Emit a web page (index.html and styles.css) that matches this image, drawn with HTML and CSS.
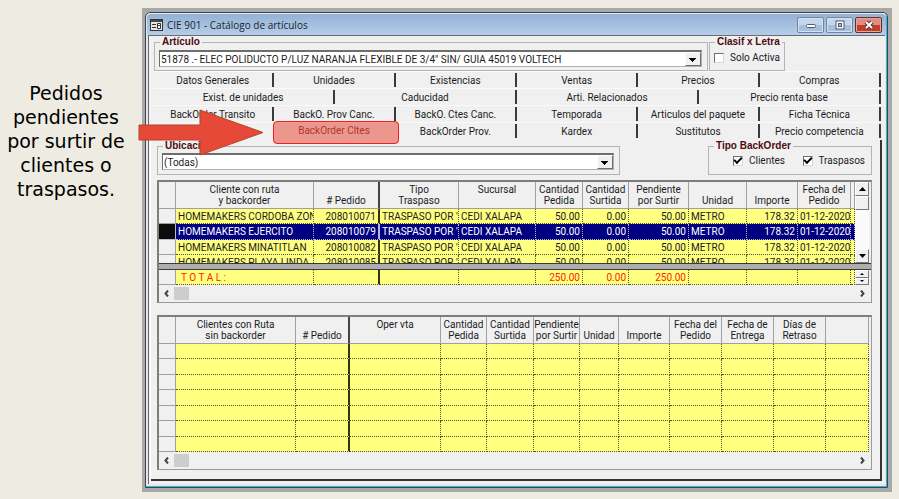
FILE: index.html
```html
<!DOCTYPE html>
<html lang="es">
<head>
<meta charset="utf-8">
<title>CIE 901 - Catálogo de artículos</title>
<link rel="stylesheet" href="styles.css">
</head>
<body>
<aside class="note">Pedidos pendientes por surtir de clientes o traspasos.</aside>
<main class="window">
  <div class="frame">
    <header class="titlebar">
      <svg class="app-icon" viewBox="0 0 13 12" width="13" height="12" aria-hidden="true">
        <rect x="0.5" y="0.5" width="12" height="11" fill="#e4e4e4" stroke="#333"/>
        <path d="M1 2h11" stroke="#444" stroke-width="2"/>
        <path d="M2 5.500h4M2 8.500h4" stroke="#333"/>
        <path d="M7.500 4.500h3v2h-3zM7.500 6.500h3v3h-3z" fill="#fff" stroke="#333"/>
      </svg>
      <h1 class="title">CIE 901 - Catálogo de artículos</h1>
      <div class="caption-buttons">
        <button type="button" class="caption" aria-label="Minimizar"><svg viewBox="0 0 12 10" width="12" height="10"><rect x="1.500" y="4.500" width="9" height="3" rx="1" fill="#fff" stroke="#4c5a6c"/></svg></button>
        <button type="button" class="caption" aria-label="Maximizar"><svg viewBox="0 0 12 10" width="12" height="10"><rect x="2" y="1" width="8" height="8" fill="#fff" stroke="#4c5a6c"/><rect x="4.500" y="3.500" width="3" height="3" fill="#a9bfd9" stroke="#4c5a6c"/></svg></button>
        <button type="button" class="caption close" aria-label="Cerrar"><svg viewBox="0 0 12 10" width="12" height="10"><path d="M3 2l6 6M9 2l-6 6" stroke="#5b2f35" stroke-width="4"/><path d="M3 2l6 6M9 2l-6 6" stroke="#fff" stroke-width="2"/></svg></button>
      </div>
    </header>
    <div class="client">
      <div class="top-row">
        <fieldset class="group grow">
          <legend>Artículo</legend>
          <div class="combo">
            <select aria-label="Artículo"><option>51878 .- ELEC POLIDUCTO P/LUZ NARANJA FLEXIBLE DE 3/4" SIN/ GUIA 45019 VOLTECH</option></select>
          </div>
        </fieldset>
        <fieldset class="group clasif">
          <legend>Clasif x Letra</legend>
          <label class="check"><input type="checkbox">Solo Activa</label>
        </fieldset>
      </div>
      <nav class="tabs">
        <div class="tab-row">
          <button type="button">Datos Generales</button><button type="button">Unidades</button><button type="button">Existencias</button><button type="button">Ventas</button><button type="button">Precios</button><button type="button">Compras</button>
        </div>
        <div class="tab-row">
          <button type="button">Exist. de unidades</button><button type="button">Caducidad</button><button type="button">Arti. Relacionados</button><button type="button">Precio renta base</button>
        </div>
        <div class="tab-row">
          <button type="button">BackOrder Transito</button><button type="button">BackO. Prov Canc.</button><button type="button">BackO. Ctes Canc.</button><button type="button">Temporada</button><button type="button">Articulos del paquete</button><button type="button">Ficha Técnica</button>
        </div>
        <div class="tab-row">
          <span class="blank"></span><button type="button" class="active">BackOrder Cltes</button><button type="button">BackOrder Prov.</button><button type="button">Kardex</button><button type="button">Sustitutos</button><button type="button">Precio competencia</button>
        </div>
      </nav>
      <section class="page">
        <div class="filters">
          <fieldset class="group grow">
            <legend>Ubicación</legend>
            <div class="combo"><select aria-label="Ubicación"><option>(Todas)</option></select></div>
          </fieldset>
          <fieldset class="group tipo">
            <legend>Tipo BackOrder</legend>
            <div class="checks">
              <label class="check"><input type="checkbox" checked>Clientes</label>
              <label class="check"><input type="checkbox" checked>Traspasos</label>
            </div>
          </fieldset>
        </div>

        <div class="grid">
          <div class="pane">
            <div class="viewport">
              <table class="orders">
                <colgroup><col class="w17"><col class="w138"><col class="w66"><col class="w79"><col class="w77"><col class="w47"><col class="w46"><col class="w60"><col class="w58"><col class="w51"><col class="w53"><col class="w4"></colgroup>
                <thead><tr><th></th><th>Cliente con ruta<br>y backorder</th><th class="thick"># Pedido</th><th>Tipo<br>Traspaso</th><th class="up">Sucursal</th><th>Cantidad<br>Pedida</th><th>Cantidad<br>Surtida</th><th>Pendiente<br>por Surtir</th><th>Unidad</th><th>Importe</th><th>Fecha del<br>Pedido</th><th></th></tr></thead>
                <tbody>
                  <tr><td></td><td>HOMEMAKERS CORDOBA ZON</td><td class="num thick">208010071</td><td>TRASPASO POR '</td><td>CEDI XALAPA</td><td class="num">50.00</td><td class="num">0.00</td><td class="num">50.00</td><td>METRO</td><td class="num">178.32</td><td>01-12-2020</td><td></td></tr>
                  <tr class="selected"><td></td><td>HOMEMAKERS EJERCITO</td><td class="num thick">208010079</td><td>TRASPASO POR '</td><td>CEDI XALAPA</td><td class="num">50.00</td><td class="num">0.00</td><td class="num">50.00</td><td>METRO</td><td class="num">178.32</td><td>01-12-2020</td><td></td></tr>
                  <tr><td></td><td>HOMEMAKERS MINATITLAN</td><td class="num thick">208010082</td><td>TRASPASO POR '</td><td>CEDI XALAPA</td><td class="num">50.00</td><td class="num">0.00</td><td class="num">50.00</td><td>METRO</td><td class="num">178.32</td><td>01-12-2020</td><td></td></tr>
                  <tr><td></td><td>HOMEMAKERS PLAYA LINDA</td><td class="num thick">208010085</td><td>TRASPASO POR '</td><td>CEDI XALAPA</td><td class="num">50.00</td><td class="num">0.00</td><td class="num">50.00</td><td>METRO</td><td class="num">178.32</td><td>01-12-2020</td><td></td></tr>
                </tbody>
              </table>
            </div>
            <div class="vscroll">
              <button type="button" aria-label="Subir"><svg viewBox="0 0 7 4" width="7" height="4"><path d="M0 4L3.500 0L7 4z"/></svg></button>
              <span class="thumb"></span>
              <span class="track"></span>
              <button type="button" aria-label="Bajar"><svg viewBox="0 0 7 4" width="7" height="4"><path d="M0 0L3.500 4L7 0z"/></svg></button>
            </div>
          </div>
          <div class="splitter"></div>
          <div class="pane">
            <div class="viewport total">
              <table class="orders">
                <colgroup><col class="w17"><col class="w138"><col class="w66"><col class="w79"><col class="w77"><col class="w47"><col class="w46"><col class="w60"><col class="w58"><col class="w51"><col class="w53"><col class="w4"></colgroup>
                <tbody><tr><td></td><td class="total-label">T O T A L :</td><td class="thick"></td><td></td><td></td><td class="num">250.00</td><td class="num">0.00</td><td class="num">250.00</td><td></td><td></td><td></td><td></td></tr></tbody>
              </table>
            </div>
            <div class="vscroll spin">
              <button type="button" aria-label="Anterior"><svg viewBox="0 0 4 2" width="4" height="2"><path d="M0 2L2 0L4 2z"/></svg></button>
              <button type="button" aria-label="Siguiente"><svg viewBox="0 0 4 2" width="4" height="2"><path d="M0 0L2 2L4 0z"/></svg></button>
            </div>
          </div>
          <div class="hscroll">
            <button type="button" aria-label="Izquierda"><svg viewBox="0 0 5 7" width="5" height="7"><path d="M4 0.500L1.500 3.500L4 6.500"/></svg></button>
            <span class="hthumb"></span>
            <button type="button" aria-label="Derecha"><svg viewBox="0 0 5 7" width="5" height="7"><path d="M1 0.500L3.500 3.500L1 6.500"/></svg></button>
          </div>
        </div>

        <div class="grid">
          <div class="pane wide">
            <table class="orders">
              <colgroup><col class="w17"><col class="w120"><col class="w54"><col class="w91"><col class="w46"><col class="w47"><col class="w46"><col class="w39"><col class="w51"><col class="w52"><col class="w52"><col class="w52"><col class="w43"></colgroup>
              <thead><tr><th></th><th>Clientes con Ruta<br>sin backorder</th><th class="thick"># Pedido</th><th class="up">Oper vta</th><th>Cantidad<br>Pedida</th><th>Cantidad<br>Surtida</th><th>Pendiente<br>por Surtir</th><th>Unidad</th><th>Importe</th><th>Fecha del<br>Pedido</th><th>Fecha de<br>Entrega</th><th>Días de<br>Retraso</th><th></th></tr></thead>
              <tbody>
                <tr><td></td><td></td><td class="thick"></td><td></td><td></td><td></td><td></td><td></td><td></td><td></td><td></td><td></td><td></td></tr>
                <tr><td></td><td></td><td class="thick"></td><td></td><td></td><td></td><td></td><td></td><td></td><td></td><td></td><td></td><td></td></tr>
                <tr><td></td><td></td><td class="thick"></td><td></td><td></td><td></td><td></td><td></td><td></td><td></td><td></td><td></td><td></td></tr>
                <tr><td></td><td></td><td class="thick"></td><td></td><td></td><td></td><td></td><td></td><td></td><td></td><td></td><td></td><td></td></tr>
                <tr><td></td><td></td><td class="thick"></td><td></td><td></td><td></td><td></td><td></td><td></td><td></td><td></td><td></td><td></td></tr>
                <tr><td></td><td></td><td class="thick"></td><td></td><td></td><td></td><td></td><td></td><td></td><td></td><td></td><td></td><td></td></tr>
                <tr><td></td><td></td><td class="thick"></td><td></td><td></td><td></td><td></td><td></td><td></td><td></td><td></td><td></td><td></td></tr>
              </tbody>
            </table>
          </div>
          <div class="hscroll">
            <button type="button" aria-label="Izquierda"><svg viewBox="0 0 5 7" width="5" height="7"><path d="M4 0.500L1.500 3.500L4 6.500"/></svg></button>
            <span class="hthumb"></span>
            <button type="button" aria-label="Derecha"><svg viewBox="0 0 5 7" width="5" height="7"><path d="M1 0.500L3.500 3.500L1 6.500"/></svg></button>
          </div>
        </div>
      </section>
    </div>
  </div>
  <svg class="arrow" viewBox="0 0 127 47" width="127" height="47" aria-hidden="true"><path d="M1 16H62V1L125 23.500L62 46V31H1z" fill="#e64937" stroke="#b9422f"/></svg>
</main>
</body>
</html>
```
FILE: styles.css
```css
* { box-sizing: border-box; }

body {
  margin: 0;
  min-height: 100vh;
  padding: 8px 7px 7px 0;
  display: grid;
  grid-template-columns: 142px minmax(0, 1fr);
  align-items: start;
  background: #eeebe2;
  color: #1c1c1c;
  font: 10px/11px Roboto, "Liberation Sans", sans-serif;
}

button, select, input { font: inherit; color: inherit; margin: 0; }
button { padding: 0; border: 0; background: none; }

.note {
  padding: 73px 10px 0 0;
  font: 19px/24px "DejaVu Sans", sans-serif;
  color: #000;
  text-align: center;
}

.window {
  position: relative;
  border: 4px solid #a9a8a8;
  border-left-width: 3px;
}

.frame {
  border: 1px solid #3c4650;
  border-radius: 5px 5px 0 0;
  background: #e3e7ec;
  box-shadow: inset -1px -1px 0 #35b7dc, 0 0 0 2px #a9a8a8;
  padding: 0 2px 3px 2px;
}

.titlebar {
  height: 22px;
  margin: 0 -1px;
  padding: 0 4px 0 3px;
  display: flex;
  align-items: center;
  gap: 4px;
  border-top: 1px solid #dfeaf6;
  border-radius: 4px 4px 0 0;
  background: linear-gradient(#94b1d4, #b5cde9);
}
.title {
  flex: 1;
  margin: 0;
  font: 10px/16px "Open Sans", sans-serif;
  color: #1a2430;
}
.caption-buttons { display: flex; gap: 2px; }
.caption {
  width: 27px;
  height: 16px;
  display: grid;
  place-items: center;
  border: 1px solid #6d87a6;
  border-radius: 2px;
  background: linear-gradient(#c4d6eb 50%, #a5bfdd 50%);
  box-shadow: inset 0 0 0 1px #d3e1f1;
}
.caption.close {
  border-color: #6b2a2a;
  background: linear-gradient(#dd8e80 50%, #c23e29 50%);
  box-shadow: inset 0 0 0 1px #e2a79c;
}

.client {
  border: 1px solid #6b6b6b;
  border-width: 1px 0 0 1px;
  background: #f0f0f0;
  padding: 0 3px 3px 2px;
}
.top-row { display: flex; gap: 1px; padding: 0 97px 0 3px; }

.group {
  margin: 0;
  min-width: 0;
  padding: 2px 5px 3px 4px;
  border: 1px solid #b4b4b4;
}
.group legend {
  margin-left: 1px;
  padding: 0 2px;
  font: bold 10px/12px "Liberation Sans", sans-serif;
  color: #4f0a10;
  white-space: nowrap;
}
.grow { flex: 1; }
.clasif { width: 76px; }

.combo {
  height: 17px;
  display: flex;
  background: #fff;
  border: 1px solid #b0b0b0;
  border-top: 2px solid #6e6e6e;
  border-left-color: #6e6e6e;
}
.combo select {
  flex: 1;
  min-width: 0;
  padding: 0 1px;
  border: 0;
  background: transparent;
  appearance: none;
}
.combo::after {
  content: "";
  width: 14px;
  border: 1px solid #fff;
  border-right-color: #707070;
  border-bottom-color: #707070;
  background: linear-gradient(#000, #000) 3px 5px / 7px 1px no-repeat, linear-gradient(#000, #000) 4px 6px / 5px 1px no-repeat, linear-gradient(#000, #000) 5px 7px / 3px 1px no-repeat, linear-gradient(#000, #000) 6px 8px / 1px 1px no-repeat, #f0f0f0;
}

.check { display: flex; align-items: center; gap: 6px; height: 15px; white-space: nowrap; }
.check input {
  appearance: none;
  flex: none;
  width: 10px;
  height: 10px;
  border: 1px solid #d8d8d8;
  border-top-color: #6e6e6e;
  border-left-color: #6e6e6e;
  background: #fff;
  display: grid;
  place-items: center;
}
.check input:checked::after {
  content: "";
  width: 6px;
  height: 3px;
  border: solid #000;
  border-width: 0 0 2px 2px;
  transform: translateY(-1px) rotate(-45deg);
}
.checks { display: flex; justify-content: space-between; padding: 0 1px 0 20px; }

.tabs { margin: 0 1px 0 2px; padding-bottom: 1px; }
.tab-row { display: flex; }
.tab-row > * {
  flex: 1 1 0;
  min-width: 0;
  height: 17px;
  padding-right: 2px;
  text-align: center;
  white-space: nowrap;
  border-top: 1px solid #fafafa;
  background: linear-gradient(#3a3a3a, #3a3a3a) right 1px / 2px 14px no-repeat;
}
.tab-row > .blank, .tab-row > .active { background: none; }
.tab-row > .active { position: relative; padding-bottom: 2px; color: #70201f; }
.active::after {
  content: "";
  position: absolute;
  inset: -2px -3px -5px -1px;
  border: 1px solid #f02020;
  border-radius: 4px;
  background: #e6493788;
}

.page {
  padding: 0 8px 9px 6px;
  border: solid #333;
  border-width: 0 2px 2px 0;
  box-shadow: -1px 0 #fff;
}
.filters { display: flex; gap: 88px; margin-bottom: 5px; }
.filters .group { padding-top: 1px; padding-bottom: 4px; }
.tipo { width: 164px; }

.grid {
  border: 2px solid #7d7d7d;
  border-right: 1px solid #9a9a9a;
  border-bottom: 1px solid #9a9a9a;
  background: #f0f0f0;
}
.grid + .grid { margin-top: 12px; }
.pane { display: flex; padding-right: 2px; }
.viewport { flex: 1; min-width: 0; height: 81px; overflow: hidden; }
.viewport.total { height: 15px; color: #ff2400; }

.orders {
  width: 100%;
  table-layout: fixed;
  border-collapse: separate;
  border-spacing: 0;
}
.orders th {
  height: 27px;
  padding: 0 0 2px;
  vertical-align: bottom;
  font-weight: normal;
  white-space: nowrap;
  border-right: 1px solid #a0a0a0;
  border-bottom: 1px solid #a0a0a0;
}
.orders th.up { vertical-align: top; padding-top: 2px; }
.orders th.thick { border-right: 2px solid #444; }
.orders td {
  height: 15px;
  padding: 0 0 0 2px;
  overflow: hidden;
  white-space: nowrap;
  background: #ffff80;
  border-right: 1px dotted #55552a;
  border-bottom: 1px dotted #55552a;
}
.orders tr:nth-child(even) td { height: 16px; }
.orders td.num { padding-right: 2px; text-align: right; }
.orders td.thick { border-right: 2px solid #33331a; }
.orders td:first-child {
  background: #f0f0f0;
  border-right: 1px solid #a0a0a0;
  border-bottom: 1px solid #a0a0a0;
}
.orders td.total-label { padding-left: 5px; }
.orders .selected td { background: #000080; color: #fff; border-color: #b8b8d0; }
.orders .selected td:first-child { background: #0c0c0c; }

.w4 { width: 4px; } .w17 { width: 17px; } .w39 { width: 39px; } .w43 { width: 43px; }
.w46 { width: 46px; } .w47 { width: 47px; } .w51 { width: 51px; } .w52 { width: 52px; }
.w53 { width: 53px; } .w54 { width: 54px; } .w58 { width: 58px; } .w60 { width: 60px; }
.w66 { width: 66px; } .w77 { width: 77px; } .w79 { width: 79px; } .w91 { width: 91px; }
.w120 { width: 120px; } .w138 { width: 138px; }

.vscroll { width: 14px; display: flex; flex-direction: column; background: #fafafa; }
.vscroll button, .thumb {
  height: 14px;
  display: grid;
  place-items: center;
  background: #f0f0f0;
  border: 1px solid #fff;
  border-right-color: #777;
  border-bottom-color: #777;
}
.track { flex: 1; }
.spin button { height: auto; flex: 1; }

.splitter {
  height: 7px;
  background: #adadad;
  border: solid #3a3a3a;
  border-width: 1px 0;
}

.hscroll { height: 17px; display: flex; align-items: center; padding: 0 5px 0 4px; }
.hscroll button { display: grid; place-items: center; width: 7px; height: 15px; }
.hscroll path { fill: none; stroke: #444; stroke-width: 2; }
.hthumb { width: 15px; height: 13px; margin: 0 auto 0 4px; background: #cdcdcd; }

.arrow { position: absolute; left: -7px; top: 97px; }
```
